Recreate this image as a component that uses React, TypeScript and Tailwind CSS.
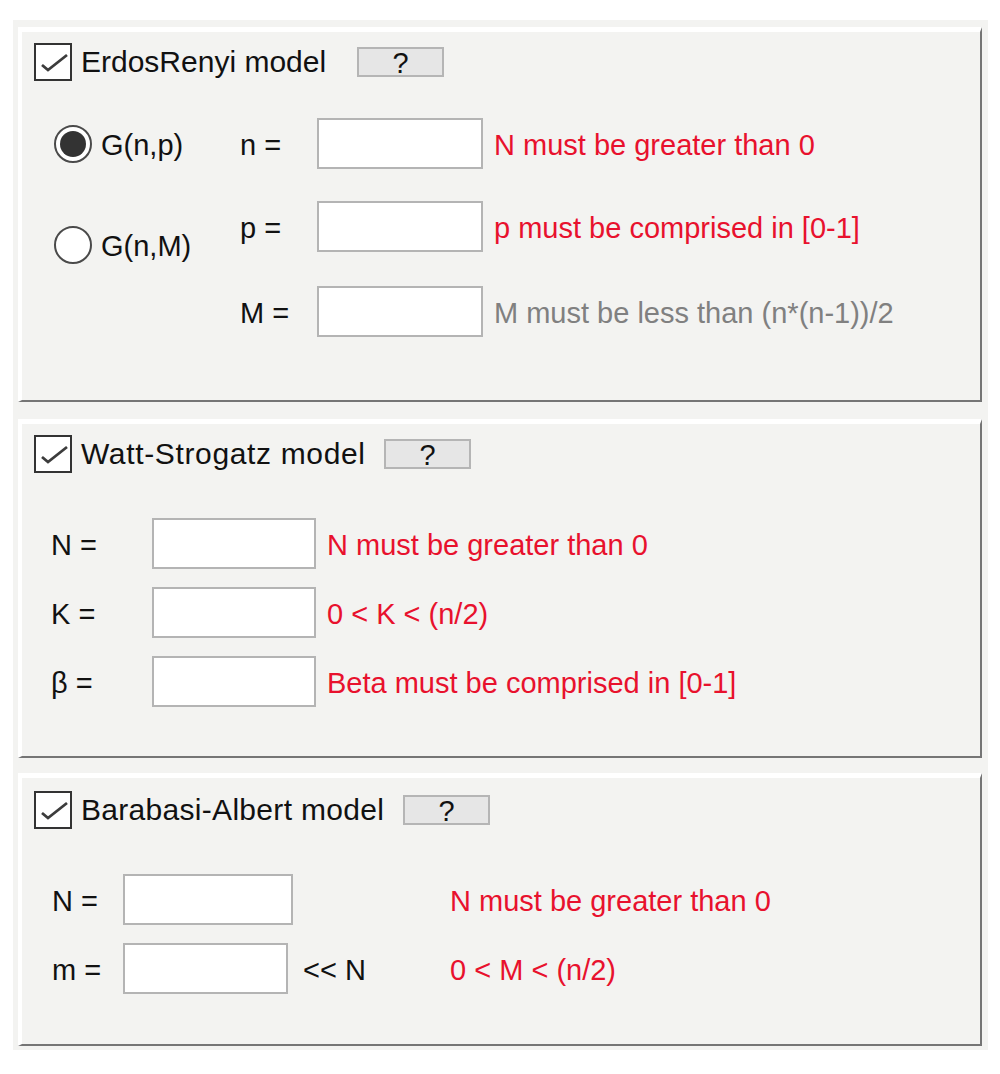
import React from "react";

function Check() {
  return (
    <div className="w-[38px] h-[38px] border-2 border-[#333333] bg-white shrink-0">
      <svg width="34" height="34" viewBox="0 0 34 34">
        <polyline points="6,20 12,25 31,10" fill="none" stroke="#3c3c3c" strokeWidth="2.8" strokeLinejoin="miter" />
      </svg>
    </div>
  );
}

function Radio({ on }: { on?: boolean }) {
  return (
    <div className="w-[38px] h-[38px] rounded-full border-2 border-[#4a4a4a] bg-white flex items-center justify-center shrink-0">
      {on ? <div className="w-[26px] h-[26px] rounded-full bg-[#333333]" /> : null}
    </div>
  );
}

function HelpButton() {
  return (
    <div className="w-[87px] h-[30px] border-2 border-[#b5b5b5] bg-[#e6e6e6] flex items-center justify-center text-[29px] leading-none text-[#111111] pt-[3px]">
      ?
    </div>
  );
}

function Title({ text, w, tr }: { text: string; w: string; tr: string }) {
  return (
    <div className="flex items-center h-[38px]">
      <Check />
      <span className={`ml-[9px] ${w} ${tr} text-[30px] leading-[38px] text-[#111111] whitespace-nowrap`}>{text}</span>
      <HelpButton />
    </div>
  );
}

function Input({ w }: { w: string }) {
  return <div className={`${w} h-[51px] border-2 border-[#b4b4b4] bg-white shrink-0`} />;
}

const panel =
  "border-t-[5px] border-l-[4px] border-r-2 border-b-2 border-t-white border-l-white border-r-[#757575] border-b-[#757575] bg-[#f3f3f1] pl-[12px]";

const red = "leading-none pt-[4px] text-[#e8112d] whitespace-nowrap";
const lab = "leading-none pt-[4px] whitespace-nowrap";

export default function App() {
  return (
    <div className="min-h-[1074px] bg-white pt-[20px] pl-[13px] font-['Liberation_Sans',Arial,sans-serif] text-[29px] text-[#111111]">
      <div className="w-[975px] bg-[#f3f3f1] pt-[7px] pl-[5px] pr-[6px] pb-[4px]">
        {/* Panel 1 */}
        <div className={`${panel} h-[375px] pt-[11px]`}>
          <Title text="ErdosRenyi model" w="w-[276px]" tr="tracking-normal" />
          <div className="flex mt-[37px]">
            <div className="ml-[20px] w-[186px] flex flex-col">
              <div className="h-[51px] flex items-center">
                <Radio on />
                <span className={`ml-[9px] ${lab}`}>G(n,p)</span>
              </div>
              <div className="h-[51px] mt-[50px] flex items-center">
                <Radio />
                <span className={`ml-[9px] ${lab}`}>G(n,M)</span>
              </div>
            </div>
            <div className="flex flex-col">
              <div className="flex items-center h-[51px]">
                <span className={`w-[77px] ${lab}`}>n =</span>
                <Input w="w-[166px]" />
                <span className={`ml-[11px] ${red}`}>N must be greater than 0</span>
              </div>
              <div className="flex items-center h-[51px] mt-[32px]">
                <span className={`w-[77px] ${lab}`}>p =</span>
                <Input w="w-[166px]" />
                <span className={`ml-[11px] ${red}`}>p must be comprised in [0-1]</span>
              </div>
              <div className="flex items-center h-[51px] mt-[34px]">
                <span className={`w-[77px] ${lab}`}>M =</span>
                <Input w="w-[166px]" />
                <span className="ml-[11px] leading-none pt-[4px] text-[#808080] whitespace-nowrap">M must be less than (n*(n-1))/2</span>
              </div>
            </div>
          </div>
        </div>

        {/* Panel 2 */}
        <div className={`${panel} h-[339px] pt-[11px] mt-[17px]`}>
          <Title text="Watt-Strogatz model" w="w-[303px]" tr="tracking-[0.65px]" />
          <div className="flex flex-col mt-[45px] ml-[17px] gap-[18px]">
            <div className="flex items-center h-[51px]">
              <span className={`w-[101px] ${lab}`}>N =</span>
              <Input w="w-[164px]" />
              <span className={`ml-[11px] ${red}`}>N must be greater than 0</span>
            </div>
            <div className="flex items-center h-[51px]">
              <span className={`w-[101px] ${lab}`}>K =</span>
              <Input w="w-[164px]" />
              <span className={`ml-[11px] ${red}`}>0 &lt; K &lt; (n/2)</span>
            </div>
            <div className="flex items-center h-[51px]">
              <span className={`w-[101px] ${lab}`}>β =</span>
              <Input w="w-[164px]" />
              <span className={`ml-[11px] ${red}`}>Beta must be comprised in [0-1]</span>
            </div>
          </div>
        </div>

        {/* Panel 3 */}
        <div className={`${panel} h-[273px] pt-[13px] mt-[15px]`}>
          <Title text="Barabasi-Albert model" w="w-[322px]" tr="tracking-[0.3px]" />
          <div className="grid grid-cols-[71px_170px_157px_1fr] items-center gap-y-[18px] mt-[45px] ml-[18px]">
            <span className={lab}>N =</span>
            <Input w="w-[170px]" />
            <span />
            <span className={red}>N must be greater than 0</span>
            <span className={lab}>m =</span>
            <Input w="w-[165px]" />
            <span className={`pl-[10px] ${lab}`}>&lt;&lt; N</span>
            <span className={red}>0 &lt; M &lt; (n/2)</span>
          </div>
        </div>
      </div>
    </div>
  );
}
